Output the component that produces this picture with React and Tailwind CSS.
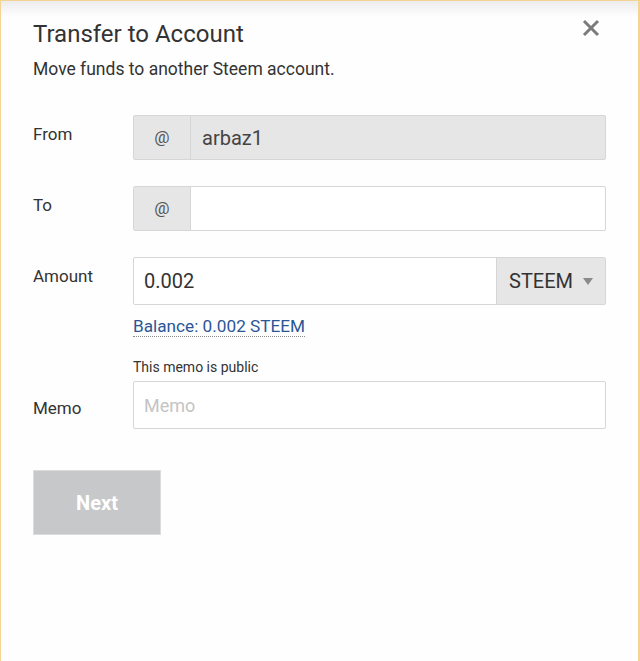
import React from "react";

function Label({ children, className = "" }) {
  return (
    <div className={`w-[100px] shrink-0 text-[17px] text-[#333] ${className}`}>{children}</div>
  );
}

function AtAddon() {
  return (
    <span className="flex w-[57px] shrink-0 items-center justify-center border-r border-[#d6d6d6] bg-[#e6e6e6] text-[17px] text-[#555]">
      @
    </span>
  );
}

export default function App() {
  return (
    <div
      className="relative h-[661px] w-[640px] overflow-hidden border-t border-l border-r-2 border-[#f3d493] bg-[#fefefe] text-[#333]"
      style={{ fontFamily: "Roboto, 'Noto Sans', sans-serif" }}
    >
      <div className="h-[16px] bg-gradient-to-b from-[#ececec] to-[#fefefe]" />
      <button className="absolute right-[38px] top-[18px] text-[#7b7b7b]" aria-label="Close">
        <svg width="18" height="18" viewBox="0 0 18 18">
          <path d="M2 2L16 16M16 2L2 16" stroke="currentColor" strokeWidth="3" strokeLinecap="butt" />
        </svg>
      </button>

      <div className="px-[32px]">
        <h1 className="mt-[2px] text-[24px] leading-[30px] text-[#333]">Transfer to Account</h1>
        <p className="mt-[9px] text-[17.5px] leading-[22px] text-[#333]">Move funds to another Steem account.</p>

        <div className="mt-[35px] flex items-center">
          <Label className="-mt-[6px] self-start pt-[13px]">From</Label>
          <div className="flex h-[45px] flex-1 overflow-hidden rounded-[2px] border border-[#d6d6d6] bg-[#e6e6e6]">
            <AtAddon />
            <div className="flex items-center px-[11px] text-[20px] text-[#444]">arbaz1</div>
          </div>
        </div>

        <div className="mt-[26px] flex items-center">
          <Label className="-mt-[6px] self-start pt-[13px]">To</Label>
          <div className="flex h-[45px] flex-1 overflow-hidden rounded-[2px] border border-[#d6d6d6] bg-white">
            <AtAddon />
            <input className="flex-1 px-[11px] text-[20px] outline-none" />
          </div>
        </div>

        <div className="mt-[26px] flex">
          <Label className="pt-[7px]">Amount</Label>
          <div className="flex-1">
            <div className="flex h-[48px] overflow-hidden rounded-[2px] border border-[#d6d6d6] bg-white">
              <div className="flex flex-1 items-center px-[10px] text-[20px] text-[#333]">0.002</div>
              <div className="flex w-[109px] items-center justify-between border-l border-[#d6d6d6] bg-[#e6e6e6] pl-[12px] pr-[12px] text-[20px] text-[#333]">
                <span>STEEM</span>
                <svg width="10" height="7" viewBox="0 0 10 7">
                  <path d="M0 0H10L5 7Z" fill="#8a8a8a" />
                </svg>
              </div>
            </div>
            <div className="mt-[10px]">
              <span className="border-b border-dotted border-[#8a8a8a] text-[17.2px] leading-[20px] text-[#2a5696]">
                Balance: 0.002 STEEM
              </span>
            </div>
          </div>
        </div>

        <div className="mt-[19px] flex">
          <Label className="pt-[38px]">Memo</Label>
          <div className="flex-1">
            <div className="text-[14px] leading-[18px] text-[#333]">This memo is public</div>
            <input
              placeholder="Memo"
              className="mt-[5px] h-[48px] w-full rounded-[2px] border border-[#d6d6d6] bg-white px-[10px] text-[18px] outline-none placeholder:text-[#c4c4c4]"
            />
          </div>
        </div>

        <button className="mt-[41px] flex h-[65px] w-[128px] items-center justify-center border border-[#dcdcdc] bg-[#c7c8ca] text-[20px] font-bold text-white">
          Next
        </button>
      </div>
    </div>
  );
}
